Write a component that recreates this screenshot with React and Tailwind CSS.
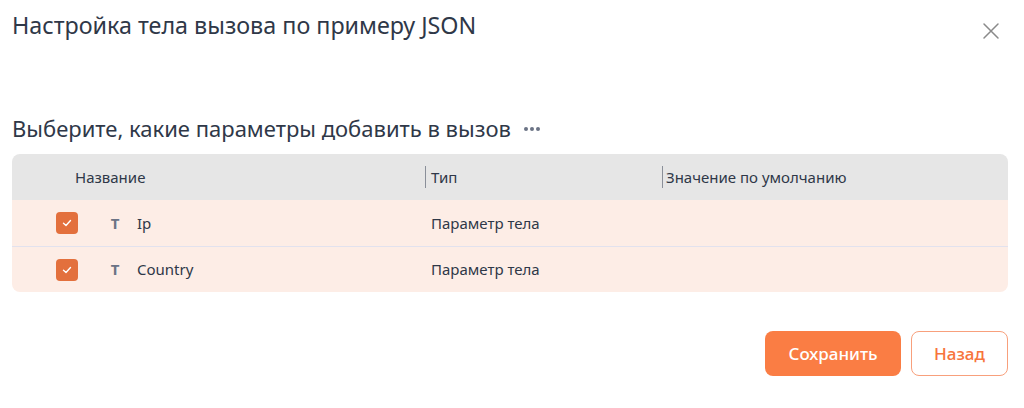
import React from "react";

const rows = [
  { name: "Ip", type: "Параметр тела" },
  { name: "Country", type: "Параметр тела" },
];

function CheckBox() {
  return (
    <span className="flex h-[22px] w-[22px] items-center justify-center rounded-[4px] bg-[#e3703d]">
      <svg width="12" height="12" viewBox="0 0 12 12" fill="none">
        <path d="M2.5 6.2 L5 8.5 L9.5 3.5" stroke="#fff" strokeWidth="1.4" strokeLinecap="round" strokeLinejoin="round" />
      </svg>
    </span>
  );
}

export default function App() {
  return (
    <div className="h-[408px] w-[1024px] bg-white font-['Noto_Sans',sans-serif] text-[#2f3848]">
      <div className="flex items-start justify-between pl-3 pr-[24px] pt-[10px]">
        <h1 className="text-[23.3px] leading-[30px] text-[#2f3848]">Настройка тела вызова по примеру JSON</h1>
        <button className="mt-[12px] text-[#8a8a8a]">
          <svg width="18" height="18" viewBox="0 0 18 18" fill="none">
            <path d="M2 2 L16 16 M16 2 L2 16" stroke="currentColor" strokeWidth="1.5" strokeLinecap="round" />
          </svg>
        </button>
      </div>

      <div className="mt-[74px] flex items-center gap-[13px] pl-3">
        <h2 className="text-[22px] leading-[28px]">Выберите, какие параметры добавить в вызов</h2>
        <span className="flex gap-[2px] pt-[2px]">
          <span className="h-[4px] w-[4px] rounded-full bg-[#6b7385]" />
          <span className="h-[4px] w-[4px] rounded-full bg-[#6b7385]" />
          <span className="h-[4px] w-[4px] rounded-full bg-[#6b7385]" />
        </span>
      </div>

      <div className="ml-3 mr-[16px] mt-[12px] overflow-hidden rounded-[8px]">
        <div className="flex h-[46px] items-center bg-[#e6e6e6] text-[15px] text-[#2f3848]">
          <div className="w-[413px] pl-[63px]">Название</div>
          <div className="flex w-[237px] items-center">
            <span className="mr-[5px] h-[22px] w-px bg-[#8a8f99]" />
            Тип
          </div>
          <div className="flex items-center">
            <span className="mr-[3px] h-[22px] w-px bg-[#8a8f99]" />
            Значение по умолчанию
          </div>
        </div>
        {rows.map((r, i) => (
          <div
            key={r.name}
            className={`flex h-[46px] items-center bg-[#fdede6] text-[15px] ${i > 0 ? "border-t border-[#e2e2ee]" : ""}`}
          >
            <div className="flex w-[413px] items-center pl-[44px]">
              <CheckBox />
              <span className="ml-[31px] w-[12px] text-center text-[15px] font-bold text-[#6b7385]">T</span>
              <span className="ml-[16px]">{r.name}</span>
            </div>
            <div className="pl-[6px]">{r.type}</div>
          </div>
        ))}
      </div>

      <div className="mt-[39px] flex justify-end gap-[10px] pr-[16px]">
        <button className="h-[45px] w-[136px] rounded-[8px] bg-[#fa7d44] text-[17px] font-medium text-white">
          Сохранить
        </button>
        <button className="h-[45px] w-[97px] rounded-[8px] border border-[#f8a07c] bg-white text-[17px] font-medium text-[#f7743c]">
          Назад
        </button>
      </div>
    </div>
  );
}
